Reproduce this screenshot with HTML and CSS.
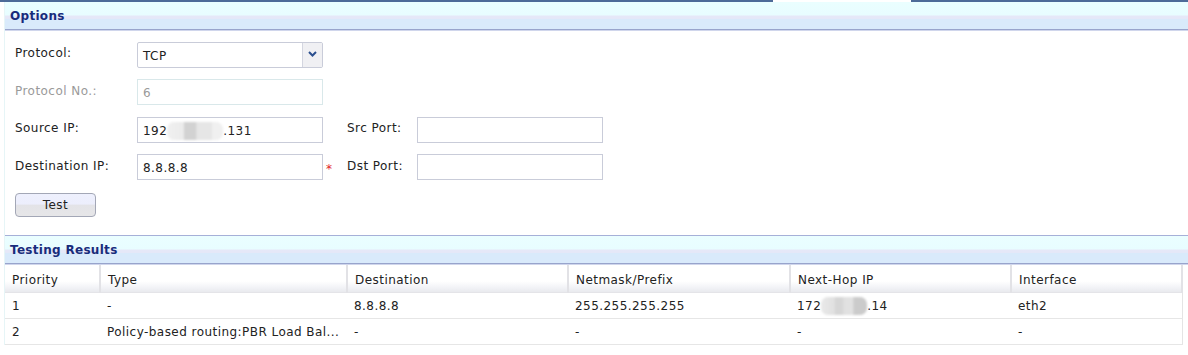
FILE: index.html
```html
<!DOCTYPE html>
<html lang="en">
<head>
    <meta charset="UTF-8">
    <title>Route Test</title>
    <link rel="stylesheet" href="styles.css">
</head>
<body>
    <div class="tabline">
        <div class="tabline-left"></div>
        <div class="tabline-gap"></div>
        <div class="tabline-right"></div>
    </div>
    <div class="panel">
        <div class="section-head first">Options</div>
        <div class="form">
            <div class="label">Protocol:</div>
            <div class="select">
                <span class="select-value">TCP</span>
                <span class="select-arrow">
                    <svg width="9" height="6" viewBox="0 0 9 6"><path d="M1 1 L4.5 4.5 L8 1" fill="none" stroke="#2b4f8e" stroke-width="2"/></svg>
                </span>
            </div>
            <div></div><div></div><div></div>

            <div class="label disabled">Protocol No.:</div>
            <div class="input disabled">6</div>
            <div></div><div></div><div></div>

            <div class="label">Source IP:</div>
            <div class="input">192<span class="blur wide"></span>.131</div>
            <div></div>
            <div class="label">Src Port:</div>
            <div class="input"></div>

            <div class="label">Destination IP:</div>
            <div class="input">8.8.8.8</div>
            <div class="req">*</div>
            <div class="label">Dst Port:</div>
            <div class="input"></div>

            <div class="btn-cell"><button class="btn">Test</button></div>
        </div>

        <div class="section-head">Testing Results</div>
        <table class="results">
            <colgroup>
                <col class="c1">
                <col class="c2">
                <col class="c3">
                <col class="c4">
                <col class="c5">
                <col class="c6">
            </colgroup>
            <thead>
                <tr>
                    <th>Priority</th>
                    <th>Type</th>
                    <th>Destination</th>
                    <th>Netmask/Prefix</th>
                    <th>Next-Hop IP</th>
                    <th>Interface</th>
                </tr>
            </thead>
            <tbody>
                <tr>
                    <td>1</td>
                    <td>-</td>
                    <td>8.8.8.8</td>
                    <td>255.255.255.255</td>
                    <td>172<span class="blur narrow"></span>.14</td>
                    <td>eth2</td>
                </tr>
                <tr>
                    <td>2</td>
                    <td>Policy-based routing:PBR Load Bal...</td>
                    <td>-</td>
                    <td>-</td>
                    <td>-</td>
                    <td>-</td>
                </tr>
            </tbody>
        </table>
    </div>
</body>
</html>
```

FILE: styles.css
```css
body {
    margin: 0;
    font-family: "DejaVu Sans", Verdana, sans-serif;
    font-size: 12px;
    letter-spacing: 0.45px;
    color: #222;
    background: #fff;
}

.tabline {
    display: flex;
    height: 2px;
}

.tabline-left {
    width: 773px;
    background: #4d6b98;
}

.tabline-gap {
    width: 138px;
}

.tabline-right {
    flex: 1;
    background: #4d6b98;
}

.panel {
    margin-left: 4px;
    border-left: 1px solid #e6f5f7;
}

.section-head {
    height: 27px;
    line-height: 28px;
    padding-left: 5px;
    font-size: 12px;
    font-weight: bold;
    letter-spacing: 0.3px;
    color: #182c7c;
    background: linear-gradient(180deg, #eafeff 0%, #e8fdff 48%, #e6e8f8 52%, #e4e8f8 62%, #d9eafb 64%, #d9eafb 100%);
    border-top: 1px solid #a6b0d8;
    border-bottom: 1px solid #98a4cc;
    box-shadow: 0 1px 0 #d0d6ec;
}

.section-head.first {
    border-top: none;
}

.form {
    display: grid;
    grid-template-columns: 122px 186px 24px 70px 186px;
    grid-auto-rows: 25px;
    row-gap: 12.5px;
    align-items: center;
    padding: 12px 0 18px 10px;
}

.label {
    padding-bottom: 3px;
}

.label.disabled {
    color: #9a9a9a;
}

.input {
    box-sizing: border-box;
    height: 26px;
    line-height: 22px;
    padding: 2px 5px 0;
    border: 1.5px solid #c9ccd9;
    background: #fff;
    white-space: nowrap;
}

.input.disabled {
    color: #9a9a9a;
    border-color: #d9e8ea;
}

.select {
    box-sizing: border-box;
    height: 26px;
    display: flex;
    border: 1.5px solid #c9ccd9;
    border-radius: 2px;
    background: #fff;
}

.select-value {
    flex: 1;
    line-height: 24px;
    padding: 1px 5px 0;
}

.select-arrow {
    width: 19px;
    display: flex;
    justify-content: center;
    align-items: center;
    padding-bottom: 2px;
    background: #f0f0f3;
    border-left: 1.5px solid #d4d6e0;
}

.req {
    color: #e3261f;
    font-size: 12px;
    padding: 3px 0 0 3px;
}

.btn-cell {
    grid-column: 1 / 3;
}

.btn {
    width: 81px;
    height: 24px;
    font-family: inherit;
    font-size: 12px;
    letter-spacing: 0.45px;
    color: #222;
    border: 1px solid #a3a7b6;
    border-radius: 4px;
    background: linear-gradient(180deg, #eef0fd 0%, #eceefc 45%, #e3e3e7 52%, #e6e6e8 100%);
    padding: 0;
}

.blur {
    display: inline-block;
    height: 18px;
    vertical-align: -5px;
    border-radius: 7px;
    filter: blur(0.8px);
}

.blur.wide {
    width: 56px;
    background: linear-gradient(90deg, #f0f0f0 0%, #ebebeb 30%, #d2d2d2 31%, #d2d2d2 52%, #e6e6e6 53%, #e6e6e6 80%, #f0f0f0 81%);
}

.blur.narrow {
    width: 46px;
    background: linear-gradient(90deg, #e9e9e9 0%, #e0e0e0 30%, #d6d6d6 31%, #d6d6d6 48%, #e0e0e0 49%, #e2e2e2 70%, #cbcbcb 71%, #cbcbcb 100%);
}

.results {
    border-collapse: collapse;
    width: 1177px;
    margin-top: 1px;
    table-layout: fixed;
}

.c1 { width: 95px; }
.c2 { width: 247px; }
.c3 { width: 221px; }
.c4 { width: 222px; }
.c5 { width: 221px; }
.c6 { width: 171px; }

.results th {
    height: 25px;
    padding: 2px 7px 0;
    text-align: left;
    font-weight: normal;
    background: linear-gradient(180deg, #fff 0%, #fff 60%, #f1f2f6 85%, #e9eaee 100%);
    border-right: 2px solid #e2e2e6;
    border-bottom: 1px solid #e4e4e8;
}

.results td {
    height: 24px;
    padding: 1px 7px 0;
    border-bottom: 1.5px solid #e6e6e6;
    white-space: nowrap;
    overflow: hidden;
}

.results tbody tr td:last-child {
    border-right: 1px solid #e4e4e4;
}
```
